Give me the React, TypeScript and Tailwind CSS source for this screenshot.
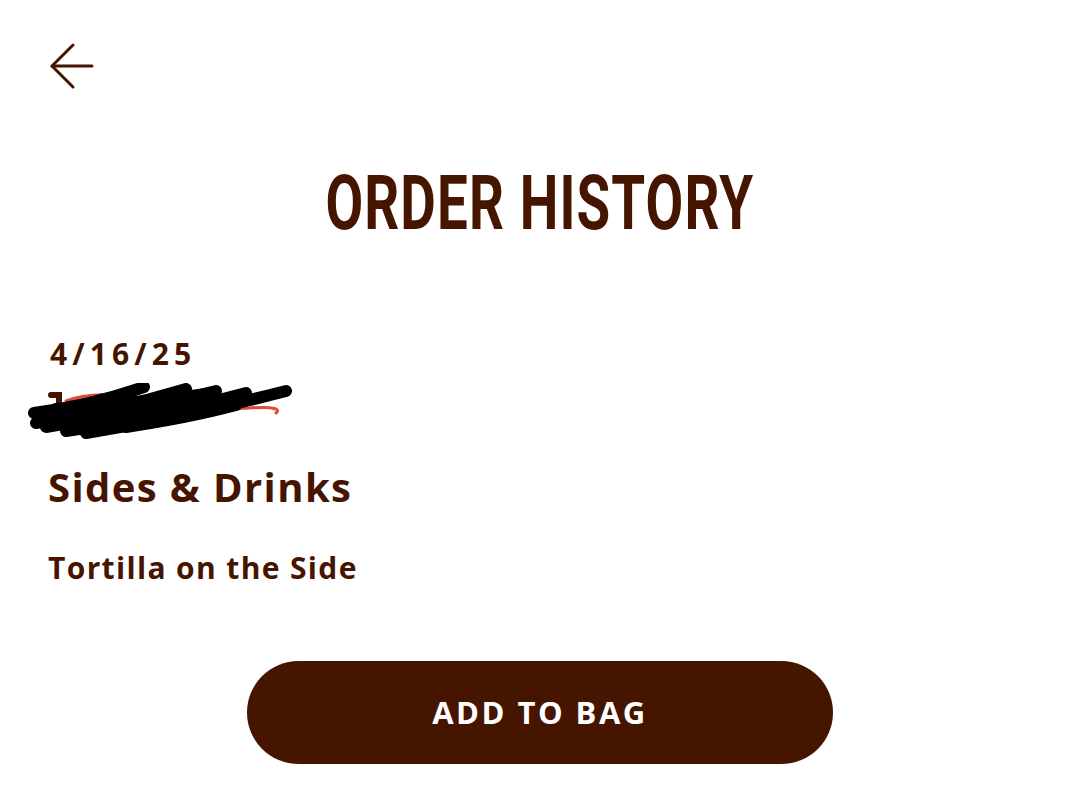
import React from "react";

const BackArrow = () => (
  <svg width="48" height="48" viewBox="0 0 48 48" fill="none" stroke="#451500" strokeWidth="3" strokeLinecap="round" strokeLinejoin="round">
    <path d="M44 24H4" />
    <path d="M25 3L4 24l21 21" />
  </svg>
);

const Redaction = () => (
  <svg width="280" height="60" viewBox="0 0 280 60" fill="none" strokeLinecap="round">
    <path d="M40 18c20-8 60-8 70 -4" stroke="#e04a3a" strokeWidth="3" />
    <path d="M200 28c20 -4 60 -6 50 2" stroke="#e04a3a" strokeWidth="3" />
    <path d="M25 12h8v20" stroke="#451500" strokeWidth="6" />
    <g stroke="#000" strokeWidth="12">
      <path d="M8 30c30-4 70-12 110-26" />
      <path d="M10 40c40-6 90-16 150-34" />
      <path d="M20 44c50-8 110-20 170-36" />
      <path d="M40 48c60-8 120-22 180-38" />
      <path d="M60 50c60-10 130-24 200-42" />
      <path d="M15 36c60-10 120-18 170-26" />
      <path d="M30 26c40-2 90-8 120-12" />
      <path d="M100 44c40-6 80-14 110-22" />
    </g>
  </svg>
);

export default function App() {
  return (
    <div className="min-h-[790px] w-full bg-white px-12 pt-[42px] text-[#451500]" style={{ fontFamily: "'Open Sans', 'Liberation Sans', sans-serif" }}>
      <button className="block">
        <BackArrow />
      </button>

      <h1
        className="mt-[75px] text-center text-[76px] font-bold leading-none tracking-[0.02em]"
        style={{ fontFamily: "Roboto, 'Liberation Sans', sans-serif" }}
      >
        <span className="inline-block scale-x-[0.72]">ORDER HISTORY</span>
      </h1>

      <div className="mt-[98px]">
        <div className="ml-[2px] text-[30px] font-bold leading-none tracking-[0.17em]">4/16/25</div>
        <div className="-ml-[22px] mt-[14px]">
          <Redaction />
        </div>
        <div className="mt-[24px] text-[40px] font-bold leading-none tracking-[0.035em]">Sides &amp; Drinks</div>
        <div className="mt-[46px] text-[30px] font-bold leading-none tracking-[0.045em]">Tortilla on the Side</div>
      </div>

      <div className="mt-[78px] flex justify-center">
        <button className="flex h-[103px] w-[586px] items-center justify-center rounded-full bg-[#451500] text-[31px] font-bold tracking-[0.08em] text-white">
          ADD TO BAG
        </button>
      </div>
    </div>
  );
}
